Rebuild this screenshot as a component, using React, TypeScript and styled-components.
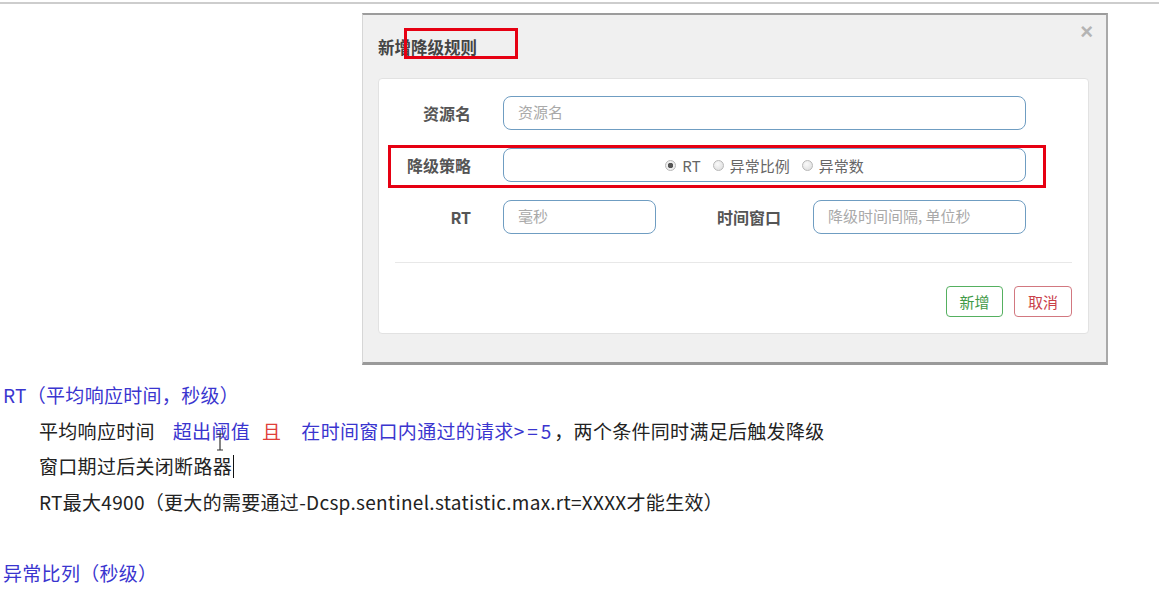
import React from 'react';
import styled, { createGlobalStyle } from 'styled-components';

const GlobalStyle = createGlobalStyle`
  body {
    margin: 0;
    background: #ffffff;
    font-family: "Noto Sans CJK SC", "Noto Sans", sans-serif;
  }
`;

const Page = styled.div`
  width: 1159px;
  min-height: 589px;
  overflow: hidden;
`;

const TopRule = styled.div`
  margin-top: 2px;
  height: 2px;
  background: #cdcdcd;
`;

const Modal = styled.div`
  position: relative;
  box-sizing: border-box;
  margin: 9px 0 0 362px;
  width: 746px;
  height: 352px;
  background: #f0f0f0;
  border-top: 2px solid #9c9c9c;
  border-right: 2px solid #a9a9a9;
  border-bottom: 3px solid #9a9a9a;
  border-left: 1px solid #d6d6d6;
`;

const Header = styled.div`
  display: flex;
  justify-content: space-between;
  align-items: center;
  height: 63px;
  padding: 0 13px 0 15px;
`;

const Title = styled.h4`
  margin: 0;
  font-size: 16.5px;
  font-weight: 700;
  color: #444;
  line-height: 20px;
`;

const Close = styled.span`
  align-self: flex-start;
  margin-top: 7px;
  font-family: "Liberation Sans", sans-serif;
  font-size: 22px;
  line-height: 20px;
  font-weight: 700;
  color: #b4b4b4;
`;

const Panel = styled.div`
  margin: 0 17px 0 15px;
  height: 256px;
  box-sizing: border-box;
  background: #ffffff;
  border: 1px solid #e2e2e2;
  border-radius: 4px;
  padding-top: 17px;
`;

const Form = styled.div`
  display: grid;
  grid-template-columns: 92px 1fr;
  column-gap: 32px;
  row-gap: 18px;
  padding-right: 62px;
`;

const Label = styled.label<{ $width?: number }>`
  display: flex;
  align-items: center;
  justify-content: flex-end;
  height: 34px;
  font-size: 16px;
  font-weight: 700;
  color: #555;
  white-space: nowrap;
  ${p => (p.$width ? `width: ${p.$width}px; flex: none;` : '')}
`;

const Input = styled.div<{ $width?: number; $center?: boolean }>`
  box-sizing: border-box;
  display: flex;
  align-items: center;
  justify-content: ${p => (p.$center ? 'center' : 'flex-start')};
  height: 34px;
  padding: 0 14px 4px;
  background: #fff;
  border: 1px solid #6f9dc2;
  border-radius: 8px;
  ${p => (p.$width ? `width: ${p.$width}px; flex: none;` : 'flex: 1;')}
`;

const Placeholder = styled.span`
  font-size: 15px;
  color: #a9a9a9;
`;

const SplitRow = styled.div`
  display: flex;
  align-items: center;
`;

const RadioGroup = styled.div`
  display: flex;
  align-items: center;
  gap: 12px;
  padding-top: 4px;
  font-size: 15px;
  color: #666;
`;

const RadioItem = styled.span`
  display: inline-flex;
  align-items: center;
  gap: 6px;
`;

const RadioDot = styled.span<{ $checked?: boolean }>`
  width: 11px;
  height: 11px;
  box-sizing: border-box;
  border-radius: 50%;
  border: 1px solid #b8b8b8;
  background: ${p =>
    p.$checked
      ? 'radial-gradient(circle, #555 0 2.5px, #eee 3px)'
      : 'radial-gradient(circle at 40% 35%, #fafafa, #d9d9d9)'};
`;

const Divider = styled.div`
  margin: 28px 16px 0;
  height: 1px;
  background: #e8e8e8;
`;

const Footer = styled.div`
  display: flex;
  justify-content: flex-end;
  gap: 11px;
  padding: 23px 16px 0 0;
`;

const Button = styled.button<{ $tone: 'ok' | 'cancel' }>`
  height: 31px;
  width: ${p => (p.$tone === 'ok' ? 57 : 58)}px;
  background: #fff;
  border: 1px solid ${p => (p.$tone === 'ok' ? '#55b060' : '#d27880')};
  color: ${p => (p.$tone === 'ok' ? '#3f9a47' : '#c9404a')};
  border-radius: 4px;
  font-family: inherit;
  font-size: 15px;
  padding: 0;
`;

const Annotation = styled.div<{ $left: number; $top: number; $w: number; $h: number }>`
  position: absolute;
  left: ${p => p.$left}px;
  top: ${p => p.$top}px;
  width: ${p => p.$w}px;
  height: ${p => p.$h}px;
  box-sizing: border-box;
  border: 3px solid #e60012;
  pointer-events: none;
`;

const Notes = styled.div`
  position: relative;
  margin-top: 12px;
  padding-left: 3px;
  font-size: 19px;
  letter-spacing: 0.3px;
  line-height: 35.5px;
  color: #222;
`;

const Heading = styled.div`
  color: #3a35cf;
`;

const Line = styled.div`
  padding-left: 36px;
  white-space: nowrap;
`;

const Blank = styled.div`
  height: 35.5px;
`;

const Tint = styled.span<{ $color: 'blue' | 'red'; $gap?: number }>`
  color: ${p => (p.$color === 'blue' ? '#3a35cf' : '#e0403a')};
  margin-left: ${p => p.$gap ?? 0}px;
`;

const Wide = styled.span`
  letter-spacing: 3px;
`;

const Caret = styled.span`
  display: inline-block;
  width: 1px;
  height: 23px;
  margin-left: 1px;
  background: #111;
  vertical-align: -4px;
`;

const IBeam = styled.svg`
  position: absolute;
  left: 215px;
  top: 56px;
`;

export default function App() {
  return (
    <Page>
      <GlobalStyle />
      <TopRule />
      <Modal>
        <Header>
          <Title>新增降级规则</Title>
          <Close>×</Close>
        </Header>
        <Panel>
          <Form>
            <Label>资源名</Label>
            <Input>
              <Placeholder>资源名</Placeholder>
            </Input>

            <Label>降级策略</Label>
            <Input $center>
              <RadioGroup>
                <RadioItem>
                  <RadioDot $checked />
                  RT
                </RadioItem>
                <RadioItem>
                  <RadioDot />
                  异常比例
                </RadioItem>
                <RadioItem>
                  <RadioDot />
                  异常数
                </RadioItem>
              </RadioGroup>
            </Input>

            <Label>RT</Label>
            <SplitRow>
              <Input $width={153}>
                <Placeholder>毫秒</Placeholder>
              </Input>
              <Label $width={125}>时间窗口</Label>
              <Input style={{ marginLeft: 32 }}>
                <Placeholder>降级时间间隔, 单位秒</Placeholder>
              </Input>
            </SplitRow>
          </Form>
          <Divider />
          <Footer>
            <Button $tone="ok">新增</Button>
            <Button $tone="cancel">取消</Button>
          </Footer>
        </Panel>
        <Annotation $left={41} $top={13} $w={114} $h={31} />
        <Annotation $left={25} $top={130} $w={658} $h={43} />
      </Modal>

      <Notes>
        <Heading>RT（平均响应时间，秒级）</Heading>
        <Line>
          平均响应时间
          <Tint $color="blue" $gap={18}>超出阈值</Tint>
          <Tint $color="red" $gap={12}>且</Tint>
          <Tint $color="blue" $gap={20}>
            在时间窗口内通过的请求<Wide>&gt;=5</Wide>
          </Tint>
          ，两个条件同时满足后触发降级
        </Line>
        <Line>
          窗口期过后关闭断路器
          <Caret />
        </Line>
        <Line>RT最大4900（更大的需要通过-Dcsp.sentinel.statistic.max.rt=XXXX才能生效）</Line>
        <Blank />
        <Heading>异常比列（秒级）</Heading>
        <IBeam width="10" height="18" viewBox="0 0 10 18">
          <path d="M2 1h6M5 1v16M2 17h6" stroke="#333" strokeWidth="1.2" fill="none" />
        </IBeam>
      </Notes>
    </Page>
  );
}
